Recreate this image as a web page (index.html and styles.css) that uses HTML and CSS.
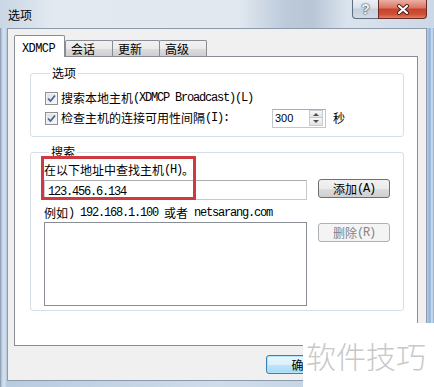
FILE: index.html
```html
<!DOCTYPE html>
<html lang="zh-CN">
<head>
    <meta charset="UTF-8">
    <title>选项</title>
    <link rel="stylesheet" href="styles.css">
</head>
<body>
    <div class="window">
        <header class="titlebar">
            <span class="title">选项</span>
            <div class="caption">
                <span class="cap-btn help">?</span>
                <span class="cap-btn close">
                    <svg width="14" height="11" viewBox="0 0 14 11">
                        <path d="M3 2 L11 9 M11 2 L3 9" stroke="#4a1a14" stroke-width="4" stroke-linecap="round"/>
                        <path d="M3 2 L11 9 M11 2 L3 9" stroke="#fff" stroke-width="2.2" stroke-linecap="round"/>
                    </svg>
                </span>
            </div>
        </header>

        <div class="client">
            <div class="tabs">
                <span class="tab active"><span class="tab-en">XDMCP</span></span>
                <span class="tab">会话</span>
                <span class="tab">更新</span>
                <span class="tab">高级</span>
            </div>

            <div class="tab-panel">
                <fieldset class="group group-options">
                    <legend>选项</legend>
                    <div class="check-row">
                        <span class="checkbox"><svg width="9" height="9" viewBox="0 0 9 9"><path d="M1 4.5 L3.5 7 L8 1.5" fill="none" stroke="#4a5f95" stroke-width="1.7"/></svg></span>
                        搜索本地主机<span class="en">(XDMCP Broadcast)(L)</span>
                    </div>
                    <div class="check-row">
                        <span class="interval-label">
                            <span class="checkbox"><svg width="9" height="9" viewBox="0 0 9 9"><path d="M1 4.5 L3.5 7 L8 1.5" fill="none" stroke="#4a5f95" stroke-width="1.7"/></svg></span>
                            检查主机的连接可用性间隔<span class="en">(I):</span>
                        </span>
                        <div class="spinner">
                            <span class="spin-value">300</span>
                            <span class="spin-btns">
                                <span class="spin"><i class="arrow-up"></i></span>
                                <span class="spin"><i class="arrow-down"></i></span>
                            </span>
                        </div>
                        <span class="unit">秒</span>
                    </div>
                </fieldset>

                <fieldset class="group group-search">
                    <legend>搜索</legend>
                    <div class="search-grid">
                        <div class="host-label">在以下地址中查找主机<span class="en">(H)</span>。</div>
                        <div class="text-input"><span class="en">123.456.6.134</span></div>
                        <button class="btn btn-add">添加<span class="en">(A)</span></button>
                        <div class="hint">例如<span class="en">) 192.168.1.100 </span>或者<span class="en"> netsarang.com</span></div>
                        <div class="listbox"></div>
                        <button class="btn btn-remove" disabled>删除<span class="en">(R)</span></button>
                        <div class="highlight"></div>
                    </div>
                </fieldset>
            </div>

            <div class="footer">
                <button class="btn btn-default">确定</button>
            </div>
        </div>
    </div>

    <div class="watermark">软件技巧</div>
</body>
</html>
```

FILE: styles.css
```css
* { box-sizing: border-box; }
body { margin: 0; width: 434px; height: 387px; overflow: hidden; position: relative; font: 12px/14px "Noto Sans CJK SC", "Noto Sans", sans-serif; color: #000; background: #c6d5e6; }
.en { font-family: "Liberation Mono", "Noto Sans CJK SC", monospace; letter-spacing: -1.2px; vertical-align: top; }

/* window frame */
.window { height: 387px; display: flex; flex-direction: column; background: linear-gradient(to right, #7f93ab 0, #c3d4e6 2px, #d5e2ef 4px, #b7cbe0 7px, #cfdcea 50%, #b9cde3 427px, #8cb0db 430px, #d6e4f3 432px, #8aa6c7 434px); }
.titlebar { height: 28px; display: flex; align-items: flex-start; background: linear-gradient(to right, #c9d6e4 0, #e2e9f1 12%, #e1e8f0 55%, #bccada 66%, #b8c6d6 72%, #dbe4ee 80%, #cbd8e6 100%); }
.title { margin: 8px 0 0 8px; }
.caption { margin-left: auto; margin-right: 7px; display: flex; height: 19px; }
.cap-btn { height: 19px; display: flex; align-items: center; justify-content: center; border: 1px solid #5f6d7e; border-top: none; }
.help { width: 26px; border-right: none; border-radius: 0 0 0 4px; background: linear-gradient(#eaf0f6, #d8e1ea 45%, #c3cfdc 50%, #d2dce7); color: #f4f6f8; font: bold 14px/1 "Liberation Sans", sans-serif; text-shadow: 0 0 1px #2a3440, 0 0 2px #2a3440; }
.close { width: 49px; border-radius: 0 0 4px 0; border-color: #6a2a22; background: linear-gradient(#eab0a3, #d9735f 45%, #c6432b 50%, #cf5036 80%, #df8068); }

/* client area */
.client { flex: 1; margin: 0 7px 6px; background: #f0f0f0; border: 1px solid #8d9aab; display: flex; flex-direction: column; }
.tabs { display: flex; align-items: flex-end; height: 21px; margin: 6px 0 0 6px; }
.tab { height: 16px; width: 47px; padding: 1px 0 0 5px; line-height: 14px; border: 1px solid #898c95; border-bottom: none; border-radius: 2px 2px 0 0; background: linear-gradient(#f2f2f2, #ebebeb 50%, #dddddd 51%, #cfcfcf); }
.tab + .tab { margin-left: -1px; width: 48px; }
.tab.active { width: 51px; height: 22px; margin-bottom: -1px; padding: 4px 0 0 7px; background: #fff; position: relative; z-index: 1; }
.tab.active + .tab { margin-left: 0; }
.tab-en { font-family: "Liberation Mono", monospace; letter-spacing: -0.6px; }
.tab-panel { margin: 0 8px 0 6px; height: 290px; background: #fff; border: 1px solid #898c95; padding: 9px 0 0 15px; }

/* group boxes */
.group { margin: 0; width: 374px; min-width: 0; border: 1px solid #d5dfe5; border-radius: 3px; }
.group legend { margin-left: 5px; padding: 0 2px; line-height: 14px; }
.group-options { padding: 8px 0 8px 14px; }
.group-search { margin-top: 8px; padding: 4px 0 4px 13px; }

.check-row { display: flex; align-items: center; height: 20px; white-space: nowrap; }
.interval-label { display: flex; align-items: center; width: 227px; }
.checkbox { flex: none; width: 13px; height: 13px; margin-right: 3px; border: 1px solid #8e8f8f; background: linear-gradient(135deg, #d9dce0, #fafafa); box-shadow: inset 0 0 0 1px #f4f4f4; display: flex; align-items: center; justify-content: center; }

.spinner { width: 54px; height: 19px; border: 1px solid #c3c7cc; border-top-color: #abadb3; background: #fff; display: flex; align-items: center; }
.spin-value { flex: 1; padding-left: 2px; font: 11px/14px "Liberation Sans", sans-serif; }
.spin-btns { width: 14px; margin-right: 2px; display: flex; flex-direction: column; }
.spin { height: 8px; border: 1px solid #c6ccd3; background: linear-gradient(#f7f7f7, #e2e2e2); display: flex; align-items: center; justify-content: center; }
.spin + .spin { border-top: none; height: 8px; }
.arrow-up { border-left: 3px solid transparent; border-right: 3px solid transparent; border-bottom: 3px solid #505050; }
.arrow-down { border-left: 3px solid transparent; border-right: 3px solid transparent; border-top: 3px solid #505050; }
.unit { margin-left: 7px; }

/* search group */
.search-grid { display: grid; grid-template-columns: 263px 72px; column-gap: 11px; position: relative; }
.host-label, .hint { grid-column: 1 / -1; height: 14px; white-space: nowrap; }
.text-input { margin-top: 3px; height: 20px; padding-left: 3px; line-height: 18px; background: #fff; border: 1px solid #c6cace; border-top-color: #abadb3; }
.text-input .en { vertical-align: baseline; }
.hint { margin-top: 6px; }
.listbox { margin-top: 2px; height: 84px; background: #fff; border: 1px solid #8a8d93; }
.highlight { position: absolute; left: -3px; top: -7px; width: 155px; height: 44px; border: 3px solid #cd3a3f; }

.btn { font: inherit; line-height: 16px; padding: 0; width: 72px; height: 19px; align-self: start; color: #000; border: 1px solid #707070; border-radius: 3px; background: linear-gradient(#f2f2f2, #ebebeb 50%, #dddddd 51%, #cfcfcf); }
.btn-add { margin-top: 2px; }
.btn-remove { margin-top: 3px; color: #838383; border-color: #adb2b5; background: #f4f4f4; }
.btn-default { width: 75px; border-color: #3c7fb1; background: linear-gradient(#eaf6fd, #d9f0fc 50%, #bee6fd 51%, #a7d9f5); box-shadow: inset 0 0 0 1px #b4e2fa; }

.footer { display: flex; padding: 9px 0 0 258px; }

/* watermark patch over the corner */
.watermark { position: absolute; left: 303px; top: 323px; width: 131px; height: 64px; padding: 15px 0 0 3px; background: #fff; color: #c8c8c8; font: 300 30px/34px "Noto Sans CJK SC", sans-serif; white-space: nowrap; }
```
